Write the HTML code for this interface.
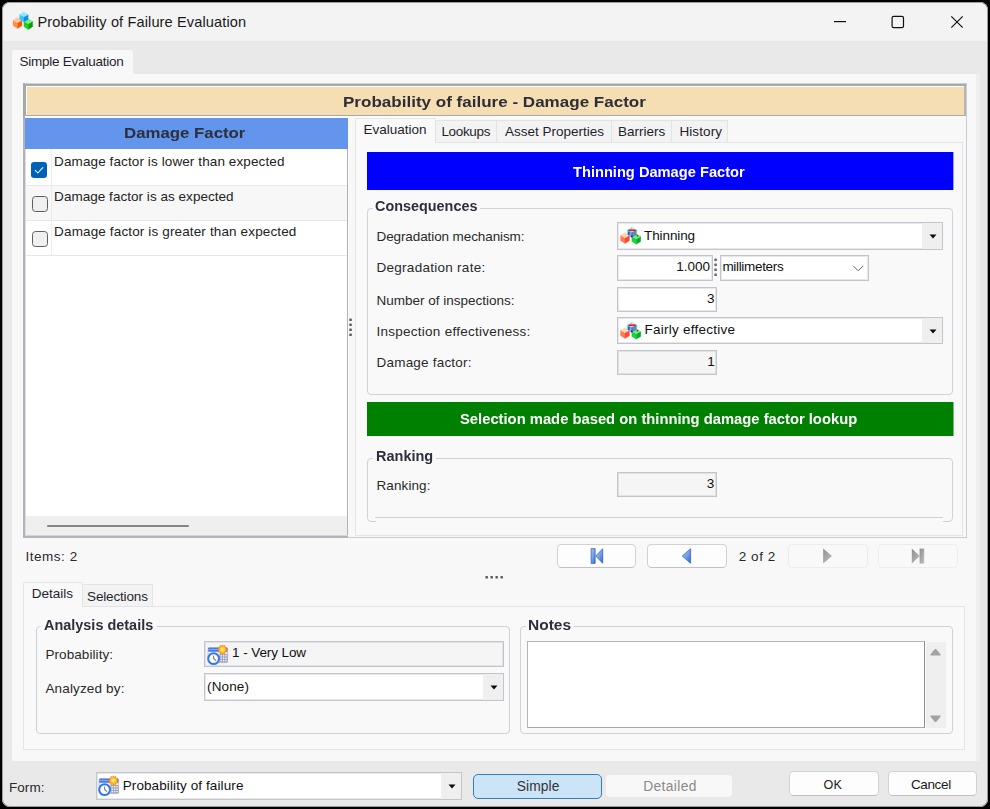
<!DOCTYPE html>
<html lang="en"><head><meta charset="utf-8"><title>Probability of Failure Evaluation</title>
<style>
html,body{margin:0;padding:0;}
body{width:990px;height:809px;background:#000;overflow:hidden;position:relative;font-family:"Liberation Sans", sans-serif;}
#win{position:absolute;left:0;top:0;width:990px;height:809px;}
#win div,#win svg,#win span.t{position:absolute;box-sizing:border-box;}
span.t{white-space:pre;font-family:"Liberation Sans", sans-serif;}
</style></head><body>
<div id="win">
<div style="left:2px;top:2px;width:986px;height:805px;background:#e9e9e9;border-radius:8px;overflow:hidden;box-shadow:inset 0 0 0 1px #9b9b9b;"></div>
<div style="left:3px;top:3px;width:984px;height:38px;background:#f3f3f3;border-radius:7px 7px 0 0;"></div>
<svg style="left:12px;top:11px" width="22.0" height="20.0" viewBox="0 0 22 20"><path d="M1.00 9.20 L5.50 11.80 L5.50 17.60 L1.00 14.80 Z" fill="#ff8f45" stroke="#ff8f45" stroke-width="0.25" stroke-linejoin="round"/><path d="M10.00 9.20 L10.00 14.80 L5.50 17.60 L5.50 11.80 Z" fill="#f4560e" stroke="#f4560e" stroke-width="0.25" stroke-linejoin="round"/><path d="M5.50 6.40 L10.00 9.20 L5.50 11.80 L1.00 9.20 Z" fill="#ffc79a" stroke="#ffc79a" stroke-width="0.25" stroke-linejoin="round"/><path d="M11.90 10.30 L16.30 12.80 L16.30 18.40 L11.90 15.70 Z" fill="#19d419" stroke="#19d419" stroke-width="0.25" stroke-linejoin="round"/><path d="M20.70 10.30 L20.70 15.70 L16.30 18.40 L16.30 12.80 Z" fill="#0a9e0a" stroke="#0a9e0a" stroke-width="0.25" stroke-linejoin="round"/><path d="M16.30 7.60 L20.70 10.30 L16.30 12.80 L11.90 10.30 Z" fill="#7df07d" stroke="#7df07d" stroke-width="0.25" stroke-linejoin="round"/><path d="M7.60 3.50 L11.90 5.80 L11.90 11.00 L7.60 8.50 Z" fill="#33c3ff" stroke="#33c3ff" stroke-width="0.25" stroke-linejoin="round"/><path d="M16.20 3.50 L16.20 8.50 L11.90 11.00 L11.90 5.80 Z" fill="#0f8fea" stroke="#0f8fea" stroke-width="0.25" stroke-linejoin="round"/><path d="M11.90 1.00 L16.20 3.50 L11.90 5.80 L7.60 3.50 Z" fill="#8fe9ff" stroke="#8fe9ff" stroke-width="0.25" stroke-linejoin="round"/></svg>
<span class="t" style="top:12.44px;font-size:14.6px;line-height:20px;color:#1a1a1a;letter-spacing:0.108px;left:37.40px;">Probability of Failure Evaluation</span>
<svg style="left:830px;top:12px" width="140" height="20" viewBox="0 0 140 20" fill="none" stroke="#111" stroke-width="1.2">
<path d="M4 9.6 H16"/>
<rect x="62.1" y="4.3" width="11.4" height="11.4" rx="1.6"/>
<path d="M121.3 4.3 L132.7 15.7 M132.7 4.3 L121.3 15.7"/>
</svg>
<div style="left:12px;top:50px;width:121px;height:26px;background:#f8f8f8;border-radius:2px 2px 0 0;"></div>
<span class="t" style="top:51.92px;font-size:13.5px;line-height:20px;color:#1f1f2e;letter-spacing:-0.229px;left:19.40px;">Simple Evaluation</span>
<div style="left:12px;top:74px;width:964px;height:687px;background:#f8f8f8;"></div>
<div style="left:976px;top:74px;width:4px;height:687px;background:#efefef;"></div>
<div style="left:23px;top:83px;width:944px;height:455px;border:1px solid #c8ccd3;border-top:none;border-left:none;"></div>
<div style="left:23px;top:83px;width:943px;height:1px;background:#cfcfcf;"></div>
<div style="left:23px;top:84px;width:943px;height:2px;background:#a9a9a9;"></div>
<div style="left:23px;top:83px;width:2px;height:35px;background:#a9a9a9;"></div>
<div style="left:25px;top:86px;width:1px;height:30px;background:#a9a9a9;"></div>
<div style="left:964px;top:86px;width:2px;height:30px;background:#b4b4b4;"></div>
<div style="left:26px;top:86px;width:938px;height:29px;background:#fff;"></div>
<div style="left:27px;top:87px;width:937px;height:28px;background:#f5deb3;"></div>
<div style="left:25px;top:115px;width:941px;height:1px;background:#a9a9a9;"></div>
<div style="left:25px;top:116px;width:941px;height:2px;background:#fbfbfb;"></div>
<span class="t" style="top:92.06px;font-size:15.4px;line-height:20px;color:#2e2e36;font-weight:700;left:342.70px;transform:scaleX(1.1068);transform-origin:0 0;">Probability of failure - Damage Factor</span>
<div style="left:25px;top:118px;width:323px;height:419px;background:#fff;"></div>
<div style="left:25px;top:118px;width:323px;height:31px;background:#6495ed;"></div>
<span class="t" style="top:123.06px;font-size:15.4px;line-height:20px;color:#2d2f3c;font-weight:700;left:124.00px;transform:scaleX(1.0917);transform-origin:0 0;">Damage Factor</span>
<div style="left:25px;top:185px;width:323px;height:35px;background:#f7f7f7;"></div>
<div style="left:25px;top:185px;width:322px;height:1px;background:#e7e7e7;"></div>
<div style="left:25px;top:220px;width:322px;height:1px;background:#e7e7e7;"></div>
<div style="left:25px;top:255px;width:322px;height:1px;background:#e7e7e7;"></div>
<div style="left:51px;top:149px;width:1px;height:106px;background:#ececec;"></div>
<div style="left:347px;top:149px;width:1px;height:388px;background:#b0b2bb;"></div>
<svg style="left:30px;top:161px" width="18" height="18" viewBox="0 0 18 18">
<rect x="1" y="1" width="16" height="16" rx="3.2" fill="#005fb8"/>
<path d="M5.2 9.4 L7.8 12 L12.8 6.6" fill="none" stroke="#fff" stroke-width="1.05" stroke-linecap="round" stroke-linejoin="round"/>
</svg>
<div style="left:31.5px;top:196px;width:16.0px;height:16px;background:#f0f0f0;border:1px solid #5f5f5f;border-radius:3.5px;"></div>
<div style="left:31.5px;top:231px;width:16.0px;height:16px;background:#f0f0f0;border:1px solid #5f5f5f;border-radius:3.5px;"></div>
<span class="t" style="top:152.02px;font-size:13.5px;line-height:20px;color:#222;letter-spacing:0.105px;left:54.10px;">Damage factor is lower than expected</span>
<span class="t" style="top:186.82px;font-size:13.5px;line-height:20px;color:#222;letter-spacing:0.034px;left:54.10px;">Damage factor is as expected</span>
<span class="t" style="top:221.92px;font-size:13.5px;line-height:20px;color:#222;letter-spacing:0.139px;left:54.10px;">Damage factor is greater than expected</span>
<div style="left:25px;top:516px;width:322px;height:20px;background:#efefef;"></div>
<div style="left:23px;top:536px;width:325px;height:2px;background:#b2b3ba;"></div>
<div style="left:25px;top:535px;width:323px;height:1px;background:#d3d4d8;"></div>
<div style="left:23px;top:118px;width:2px;height:420px;background:#b2b3ba;"></div>
<div style="left:25px;top:149px;width:1px;height:387px;background:#dcdde0;"></div>
<div style="left:47px;top:525px;width:142px;height:2px;background:#858585;border-radius:1px;"></div>
<div style="left:348px;top:118px;width:618px;height:419px;background:#f8f8f8;"></div>
<div style="left:435px;top:120px;width:62px;height:23px;background:#f3f3f3;border:1px solid #e4e4e4;border-bottom:none;"></div>
<span class="t" style="top:122.42px;font-size:13.5px;line-height:20px;color:#1f1f2e;letter-spacing:-0.341px;left:441.40px;">Lookups</span>
<div style="left:496px;top:120px;width:116px;height:23px;background:#f3f3f3;border:1px solid #e4e4e4;border-bottom:none;"></div>
<span class="t" style="top:122.42px;font-size:13.5px;line-height:20px;color:#1f1f2e;letter-spacing:0.010px;left:504.90px;">Asset Properties</span>
<div style="left:611px;top:120px;width:61px;height:23px;background:#f3f3f3;border:1px solid #e4e4e4;border-bottom:none;"></div>
<span class="t" style="top:122.42px;font-size:13.5px;line-height:20px;color:#1f1f2e;left:618.10px;">Barriers</span>
<div style="left:671px;top:120px;width:57px;height:23px;background:#f3f3f3;border:1px solid #e4e4e4;border-bottom:none;"></div>
<span class="t" style="top:122.42px;font-size:13.5px;line-height:20px;color:#1f1f2e;letter-spacing:0.114px;left:679.40px;">History</span>
<div style="left:355px;top:142px;width:608px;height:394px;background:#f9f9f9;border:1px solid #e4e4e4;"></div>
<div style="left:355px;top:118px;width:81px;height:25px;background:#f9f9f9;border:1px solid #e4e4e4;border-bottom:none;border-radius:2px 2px 0 0;"></div>
<span class="t" style="top:119.82px;font-size:13.5px;line-height:20px;color:#1f1f2e;letter-spacing:-0.005px;left:363.40px;">Evaluation</span>
<div style="left:367px;top:152px;width:586px;height:38px;background:#0000ff;"></div>
<div style="left:953px;top:152px;width:1px;height:38px;background:#9c9cfc;"></div>
<span class="t" style="top:163.24px;font-size:13.75px;line-height:20px;color:#fff;font-weight:700;left:573.10px;transform:scaleX(1.0651);transform-origin:0 0;">Thinning Damage Factor</span>
<div style="left:367px;top:208px;width:586px;height:187px;border:1px solid #cdd3da;border-radius:4px;"></div>
<div style="left:373px;top:205px;width:107px;height:7px;background:#f9f9f9;"></div>
<span class="t" style="top:197.14px;font-size:13.75px;line-height:20px;color:#2d2f3c;font-weight:700;left:375.00px;transform:scaleX(1.0469);transform-origin:0 0;">Consequences</span>
<span class="t" style="top:227.02px;font-size:13.5px;line-height:20px;color:#2a2a2a;letter-spacing:-0.099px;left:376.50px;">Degradation mechanism:</span>
<span class="t" style="top:258.42px;font-size:13.5px;line-height:20px;color:#2a2a2a;letter-spacing:0.273px;left:376.50px;">Degradation rate:</span>
<span class="t" style="top:290.52px;font-size:13.5px;line-height:20px;color:#2a2a2a;left:376.50px;">Number of inspections:</span>
<span class="t" style="top:322.02px;font-size:13.5px;line-height:20px;color:#2a2a2a;letter-spacing:0.259px;left:376.50px;">Inspection effectiveness:</span>
<span class="t" style="top:353.32px;font-size:13.5px;line-height:20px;color:#2a2a2a;letter-spacing:0.208px;left:376.50px;">Damage factor:</span>
<div style="left:617px;top:222px;width:326px;height:28px;background:#fff;border:1px solid #c3c4cc;box-shadow:inset 0 0 0 1px rgba(196,197,206,0.4);"></div>
<div style="left:922px;top:223px;width:20px;height:26px;background:#efefef;"></div>
<svg style="left:928.6px;top:234.2px" width="8" height="5" viewBox="0 0 8 5"><path d="M0.5 0.5 H7.5 L4 4.6 Z" fill="#0a0a0a"/></svg>
<div style="left:617px;top:255px;width:96px;height:26px;background:#fff;border:1px solid #c3c4cc;box-shadow:inset 0 0 0 1px rgba(196,197,206,0.4);"></div>
<div style="left:720px;top:255px;width:149px;height:26px;background:#fff;border:1px solid #c3c4cc;box-shadow:inset 0 0 0 1px rgba(196,197,206,0.4);"></div>
<div style="left:617px;top:287px;width:100px;height:25px;background:#fff;border:1px solid #c3c4cc;box-shadow:inset 0 0 0 1px rgba(196,197,206,0.4);"></div>
<div style="left:617px;top:317px;width:326px;height:27px;background:#fff;border:1px solid #c3c4cc;box-shadow:inset 0 0 0 1px rgba(196,197,206,0.4);"></div>
<div style="left:922px;top:318px;width:20px;height:25px;background:#efefef;"></div>
<svg style="left:928.6px;top:328.7px" width="8" height="5" viewBox="0 0 8 5"><path d="M0.5 0.5 H7.5 L4 4.6 Z" fill="#0a0a0a"/></svg>
<div style="left:617px;top:350px;width:100px;height:25px;background:#f5f5f5;border:1px solid #c3c4cc;box-shadow:inset 0 0 0 1px rgba(196,197,206,0.4);"></div>
<span class="t" style="top:225.62px;font-size:13.5px;line-height:20px;color:#111;letter-spacing:-0.114px;left:644.10px;">Thinning</span>
<span class="t" style="top:320.12px;font-size:13.5px;line-height:20px;color:#111;letter-spacing:0.261px;left:644.40px;">Fairly effective</span>
<span class="t" style="top:257.02px;font-size:13.5px;line-height:20px;color:#111;right:279.90px;">1.000</span>
<span class="t" style="top:289.02px;font-size:13.5px;line-height:20px;color:#111;right:275.60px;">3</span>
<span class="t" style="top:352.12px;font-size:13.5px;line-height:20px;color:#111;right:275.30px;">1</span>
<span class="t" style="top:257.32px;font-size:13.5px;line-height:20px;color:#111;letter-spacing:-0.322px;left:722.40px;">millimeters</span>
<svg style="left:852px;top:264px" width="12" height="8" viewBox="0 0 12 8"><path d="M1.2 1.8 L6.2 6.8 L11.2 1.8" fill="none" stroke="#666" stroke-width="1"/></svg>
<svg style="left:712px;top:255px" width="8" height="24" viewBox="0 0 8 24"><rect x="2.35" y="3.45" width="2.5" height="2.5" rx="0.5" fill="#666"/><rect x="2.35" y="8.45" width="2.5" height="2.5" rx="0.5" fill="#666"/><rect x="2.35" y="13.45" width="2.5" height="2.5" rx="0.5" fill="#666"/><rect x="2.35" y="18.45" width="2.5" height="2.5" rx="0.5" fill="#666"/></svg>
<div style="left:367px;top:402px;width:586px;height:34px;background:#008000;"></div>
<div style="left:953px;top:402px;width:1px;height:34px;background:#7cbc7c;"></div>
<span class="t" style="top:410.44px;font-size:13.75px;line-height:20px;color:#fff;font-weight:700;left:460.00px;transform:scaleX(1.0741);transform-origin:0 0;">Selection made based on thinning damage factor lookup</span>
<div style="left:367px;top:458px;width:586px;height:64px;border:1px solid #cdd3da;border-radius:4px;"></div>
<div style="left:376px;top:519px;width:567px;height:5px;background:#f9f9f9;"></div>
<div style="left:375px;top:517px;width:568px;height:1px;background:#cdd3da;"></div>
<div style="left:373px;top:455px;width:63px;height:7px;background:#f9f9f9;"></div>
<span class="t" style="top:447.34px;font-size:13.75px;line-height:20px;color:#2d2f3c;font-weight:700;left:375.80px;transform:scaleX(1.0544);transform-origin:0 0;">Ranking</span>
<span class="t" style="top:475.72px;font-size:13.5px;line-height:20px;color:#2a2a2a;letter-spacing:0.100px;left:376.50px;">Ranking:</span>
<div style="left:617px;top:472px;width:100px;height:25px;background:#f5f5f5;border:1px solid #c3c4cc;box-shadow:inset 0 0 0 1px rgba(196,197,206,0.4);"></div>
<span class="t" style="top:474.32px;font-size:13.5px;line-height:20px;color:#111;right:275.70px;">3</span>
<span class="t" style="top:546.82px;font-size:13.5px;line-height:20px;color:#2a2a2a;letter-spacing:0.541px;left:25.40px;">Items: 2</span>
<div style="left:557px;top:544px;width:79px;height:24px;background:#fdfdfd;border:1px solid #d2d2d2;border-bottom-color:#c2c2c2;border-radius:4.5px;"></div>
<div style="left:647px;top:544px;width:80px;height:24px;background:#fdfdfd;border:1px solid #d2d2d2;border-bottom-color:#c2c2c2;border-radius:4.5px;"></div>
<div style="left:788px;top:544px;width:80px;height:24px;background:#f9f9f9;border:1px solid #ececec;border-radius:4.5px;"></div>
<div style="left:878px;top:544px;width:80px;height:24px;background:#f9f9f9;border:1px solid #ececec;border-radius:4.5px;"></div>
<svg style="left:588px;top:547px" width="18" height="18" viewBox="0 0 18 18">
<defs><linearGradient id="nb" x1="0" y1="0" x2="1" y2="1"><stop offset="0" stop-color="#a6c8f4"/><stop offset="0.55" stop-color="#6f9fe6"/><stop offset="1" stop-color="#2f62c8"/></linearGradient>
<linearGradient id="ng" x1="0" y1="0" x2="1" y2="1"><stop offset="0" stop-color="#8e8e8e"/><stop offset="1" stop-color="#c2c2c2"/></linearGradient></defs>
<rect x="3.1" y="1.7" width="4" height="14.6" fill="url(#nb)" stroke="#2a58c2" stroke-width="0.7"/>
<path d="M14.7 1.7 L14.7 16.3 L7.7 9 Z" fill="url(#nb)" stroke="#2a58c2" stroke-width="0.7" stroke-linejoin="round"/></svg>
<svg style="left:679px;top:547px" width="18" height="18" viewBox="0 0 18 18">
<path d="M11.6 1.7 L11.6 16.3 L3.2 9 Z" fill="url(#nb)" stroke="#2a58c2" stroke-width="0.7" stroke-linejoin="round"/></svg>
<svg style="left:820px;top:547px" width="18" height="18" viewBox="0 0 18 18">
<path d="M3.2 1.6 L3.2 16.6 L12 9.1 Z" fill="url(#ng)"/></svg>
<svg style="left:909px;top:547px" width="18" height="18" viewBox="0 0 18 18">
<path d="M2.8 1.6 L2.8 16.6 L10.8 9.1 Z" fill="url(#ng)"/><rect x="10.6" y="1.6" width="4.6" height="15" fill="url(#ng)"/></svg>
<span class="t" style="top:547.22px;font-size:13.5px;line-height:20px;color:#2a2a2a;letter-spacing:0.524px;left:738.80px;">2 of 2</span>
<svg style="left:483px;top:573px" width="24" height="8" viewBox="0 0 24 8"><rect x="2.45" y="3.0" width="2.5" height="2.5" rx="0.5" fill="#5c5c5c"/><rect x="7.45" y="3.0" width="2.5" height="2.5" rx="0.5" fill="#5c5c5c"/><rect x="12.45" y="3.0" width="2.5" height="2.5" rx="0.5" fill="#5c5c5c"/><rect x="17.45" y="3.0" width="2.5" height="2.5" rx="0.5" fill="#5c5c5c"/></svg>
<div style="left:82px;top:584px;width:71px;height:23px;background:#f3f3f3;border:1px solid #e4e4e4;border-bottom:none;"></div>
<span class="t" style="top:586.52px;font-size:13.5px;line-height:20px;color:#1f1f2e;letter-spacing:-0.166px;left:87.10px;">Selections</span>
<div style="left:23px;top:606px;width:942px;height:144px;background:#f9f9f9;border:1px solid #e4e4e4;"></div>
<div style="left:23px;top:581.5px;width:60px;height:25.5px;background:#f9f9f9;border:1px solid #e4e4e4;border-bottom:none;border-radius:2px 2px 0 0;"></div>
<span class="t" style="top:584.02px;font-size:13.5px;line-height:20px;color:#1f1f2e;letter-spacing:0.022px;left:31.70px;">Details</span>
<div style="left:36px;top:626px;width:474px;height:108px;border:1px solid #cdd3da;border-radius:4px;"></div>
<div style="left:41px;top:623px;width:116px;height:7px;background:#f9f9f9;"></div>
<span class="t" style="top:616.34px;font-size:13.75px;line-height:20px;color:#2d2f3c;font-weight:700;left:44.00px;transform:scaleX(1.0506);transform-origin:0 0;">Analysis details</span>
<span class="t" style="top:644.52px;font-size:13.5px;line-height:20px;color:#2a2a2a;letter-spacing:0.082px;left:45.40px;">Probability:</span>
<span class="t" style="top:679.32px;font-size:13.5px;line-height:20px;color:#2a2a2a;letter-spacing:0.155px;left:45.40px;">Analyzed by:</span>
<div style="left:204px;top:641px;width:300px;height:26px;background:#f5f5f5;border:1px solid #c3c4cc;box-shadow:inset 0 0 0 1px rgba(196,197,206,0.4);"></div>
<div style="left:204px;top:673px;width:300px;height:28px;background:#fff;border:1px solid #c3c4cc;box-shadow:inset 0 0 0 1px rgba(196,197,206,0.4);"></div>
<div style="left:483px;top:674px;width:20px;height:26px;background:#efefef;"></div>
<svg style="left:489.6px;top:685.2px" width="8" height="5" viewBox="0 0 8 5"><path d="M0.5 0.5 H7.5 L4 4.6 Z" fill="#0a0a0a"/></svg>
<span class="t" style="top:643.22px;font-size:13.5px;line-height:20px;color:#111;letter-spacing:-0.095px;left:232.10px;">1 - Very Low</span>
<span class="t" style="top:676.52px;font-size:13.5px;line-height:20px;color:#111;letter-spacing:0.147px;left:207.00px;">(None)</span>
<div style="left:520px;top:626px;width:433px;height:108px;border:1px solid #cdd3da;border-radius:4px;"></div>
<div style="left:526px;top:623px;width:48px;height:7px;background:#f9f9f9;"></div>
<span class="t" style="top:616.34px;font-size:13.75px;line-height:20px;color:#2d2f3c;font-weight:700;left:528.20px;transform:scaleX(1.1256);transform-origin:0 0;">Notes</span>
<div style="left:527px;top:641px;width:398px;height:87px;background:#fff;border:1px solid #b4b5bc;border-right-color:#8f8f8f;border-bottom-color:#a8a8a8;"></div>
<div style="left:926px;top:642px;width:20px;height:86px;background:#efefef;"></div>
<svg style="left:929.3px;top:648px" width="13" height="9" viewBox="0 0 13 9"><path d="M6.5 1.2 Q7 0.8 7.6 1.6 L11.6 6.4 Q12 7.4 11 7.4 L2 7.4 Q1 7.4 1.4 6.4 L5.4 1.6 Q6 0.8 6.5 1.2Z" fill="#a2a2a2"/></svg>
<svg style="left:929.3px;top:714px" width="13" height="9" viewBox="0 0 13 9"><path d="M6.5 7.8 Q7 8.2 7.6 7.4 L11.6 2.6 Q12 1.6 11 1.6 L2 1.6 Q1 1.6 1.4 2.6 L5.4 7.4 Q6 8.2 6.5 7.8Z" fill="#a2a2a2"/></svg>
<span class="t" style="top:778.42px;font-size:13.5px;line-height:20px;color:#2a2a2a;letter-spacing:0.012px;left:9.10px;">Form:</span>
<div style="left:96px;top:772px;width:366px;height:28px;background:#fff;border:1px solid #c3c4cc;box-shadow:inset 0 0 0 1px rgba(196,197,206,0.4);"></div>
<div style="left:441px;top:773px;width:20px;height:26px;background:#efefef;"></div>
<svg style="left:447.6px;top:784.2px" width="8" height="5" viewBox="0 0 8 5"><path d="M0.5 0.5 H7.5 L4 4.6 Z" fill="#0a0a0a"/></svg>
<span class="t" style="top:775.62px;font-size:13.5px;line-height:20px;color:#111;letter-spacing:0.102px;left:122.70px;">Probability of failure</span>
<div style="left:472.5px;top:773.5px;width:129.5px;height:25.0px;background:#cce4f7;border:1.5px solid #2f7fc4;border-radius:5px;"></div>
<span class="t" style="top:777.02px;font-size:13.8px;line-height:20px;color:#333;letter-spacing:0.083px;left:516.80px;">Simple</span>
<div style="left:606px;top:775px;width:125.5px;height:22px;background:#f8f8f8;border-radius:4px;"></div>
<span class="t" style="top:777.02px;font-size:13.8px;line-height:20px;color:#8a8a8a;letter-spacing:0.382px;left:643.20px;">Detailed</span>
<div style="left:789px;top:770.5px;width:89.5px;height:25.0px;background:#fdfdfd;border:1px solid #d2d2d2;border-bottom-color:#c0c0c0;border-radius:4.5px;"></div>
<span class="t" style="top:774.83px;font-size:12.6px;line-height:20px;color:#1a1a1a;letter-spacing:0.397px;left:823.40px;">OK</span>
<div style="left:887.5px;top:770.5px;width:89.5px;height:25.0px;background:#fdfdfd;border:1px solid #d2d2d2;border-bottom-color:#c0c0c0;border-radius:4.5px;"></div>
<span class="t" style="top:774.52px;font-size:13.5px;line-height:20px;color:#1a1a1a;letter-spacing:-0.346px;left:910.90px;">Cancel</span>
<svg style="left:620px;top:227px;filter:blur(0.3px)" width="22" height="18" viewBox="0 0 22 18"><path d="M0.50 8.30 L5.00 10.80 L5.00 16.40 L0.50 13.70 Z" fill="#ff7a55" stroke="#ff7a55" stroke-width="0.25" stroke-linejoin="round"/><path d="M9.50 8.30 L9.50 13.70 L5.00 16.40 L5.00 10.80 Z" fill="#ff4a2e" stroke="#ff4a2e" stroke-width="0.25" stroke-linejoin="round"/><path d="M5.00 5.60 L9.50 8.30 L5.00 10.80 L0.50 8.30 Z" fill="#ffd6b4" stroke="#ffd6b4" stroke-width="0.25" stroke-linejoin="round"/><path d="M11.80 9.40 L16.30 11.80 L16.30 17.20 L11.80 14.60 Z" fill="#16d63c" stroke="#16d63c" stroke-width="0.25" stroke-linejoin="round"/><path d="M20.80 9.40 L20.80 14.60 L16.30 17.20 L16.30 11.80 Z" fill="#08aa2a" stroke="#08aa2a" stroke-width="0.25" stroke-linejoin="round"/><path d="M16.30 6.80 L20.80 9.40 L16.30 11.80 L11.80 9.40 Z" fill="#5cf57a" stroke="#5cf57a" stroke-width="0.25" stroke-linejoin="round"/><path d="M7.40 2.70 L12.00 5.00 L12.00 10.20 L7.40 7.70 Z" fill="#3fd0f4" stroke="#3fd0f4" stroke-width="0.25" stroke-linejoin="round"/><path d="M16.60 2.70 L16.60 7.70 L12.00 10.20 L12.00 5.00 Z" fill="#2a9ef0" stroke="#2a9ef0" stroke-width="0.25" stroke-linejoin="round"/><path d="M12.00 0.20 L16.60 2.70 L12.00 5.00 L7.40 2.70 Z" fill="#b8e6f8" stroke="#b8e6f8" stroke-width="0.25" stroke-linejoin="round"/><path d="M8.4 2.4 H15.8 V4.1 H8.4 Z" fill="#dd1414" opacity="0.92"/><path d="M10 1.2 L11.4 0.6 L11.8 1.8 Z" fill="#7fbf4f"/><path d="M8.2 4.6 L9.6 5 L9.4 8.6 L8.2 7.8 Z" fill="#5a22c8"/><path d="M11.4 5.4 L12.6 5.4 L12.6 9.8 L11.4 9.8 Z" fill="#e23a2a"/><path d="M13.6 5.2 L14.8 4.9 L15.6 7.6 L14.6 8.2 Z" fill="#e05a48"/><circle cx="11.6" cy="9.4" r="1" fill="#5014d0"/><circle cx="17.6" cy="8.6" r="0.9" fill="#d81818"/></svg>
<svg style="left:620px;top:322px;filter:blur(0.3px)" width="22" height="18" viewBox="0 0 22 18"><path d="M0.50 8.30 L5.00 10.80 L5.00 16.40 L0.50 13.70 Z" fill="#ff7a55" stroke="#ff7a55" stroke-width="0.25" stroke-linejoin="round"/><path d="M9.50 8.30 L9.50 13.70 L5.00 16.40 L5.00 10.80 Z" fill="#ff4a2e" stroke="#ff4a2e" stroke-width="0.25" stroke-linejoin="round"/><path d="M5.00 5.60 L9.50 8.30 L5.00 10.80 L0.50 8.30 Z" fill="#ffd6b4" stroke="#ffd6b4" stroke-width="0.25" stroke-linejoin="round"/><path d="M11.80 9.40 L16.30 11.80 L16.30 17.20 L11.80 14.60 Z" fill="#16d63c" stroke="#16d63c" stroke-width="0.25" stroke-linejoin="round"/><path d="M20.80 9.40 L20.80 14.60 L16.30 17.20 L16.30 11.80 Z" fill="#08aa2a" stroke="#08aa2a" stroke-width="0.25" stroke-linejoin="round"/><path d="M16.30 6.80 L20.80 9.40 L16.30 11.80 L11.80 9.40 Z" fill="#5cf57a" stroke="#5cf57a" stroke-width="0.25" stroke-linejoin="round"/><path d="M7.40 2.70 L12.00 5.00 L12.00 10.20 L7.40 7.70 Z" fill="#3fd0f4" stroke="#3fd0f4" stroke-width="0.25" stroke-linejoin="round"/><path d="M16.60 2.70 L16.60 7.70 L12.00 10.20 L12.00 5.00 Z" fill="#2a9ef0" stroke="#2a9ef0" stroke-width="0.25" stroke-linejoin="round"/><path d="M12.00 0.20 L16.60 2.70 L12.00 5.00 L7.40 2.70 Z" fill="#b8e6f8" stroke="#b8e6f8" stroke-width="0.25" stroke-linejoin="round"/><path d="M8.4 2.4 H15.8 V4.1 H8.4 Z" fill="#dd1414" opacity="0.92"/><path d="M10 1.2 L11.4 0.6 L11.8 1.8 Z" fill="#7fbf4f"/><path d="M8.2 4.6 L9.6 5 L9.4 8.6 L8.2 7.8 Z" fill="#5a22c8"/><path d="M11.4 5.4 L12.6 5.4 L12.6 9.8 L11.4 9.8 Z" fill="#e23a2a"/><path d="M13.6 5.2 L14.8 4.9 L15.6 7.6 L14.6 8.2 Z" fill="#e05a48"/><circle cx="11.6" cy="9.4" r="1" fill="#5014d0"/><circle cx="17.6" cy="8.6" r="0.9" fill="#d81818"/></svg>
<svg style="left:207.4px;top:643.8px" width="22" height="22" viewBox="0 0 22 22">
<defs><radialGradient id="sun" cx="0.5" cy="0.5" r="0.5"><stop offset="0" stop-color="#fff9b0"/><stop offset="0.35" stop-color="#ffd83a"/><stop offset="0.8" stop-color="#ff8a14"/><stop offset="1" stop-color="#ff7a10"/></radialGradient></defs>
<rect x="1" y="4" width="19.6" height="14.6" rx="1.4" fill="#eef2fb" stroke="#9aa8c8" stroke-width="0.6"/>
<rect x="1" y="3.6" width="19.6" height="4.2" rx="1.2" fill="#4a7be6"/>
<rect x="1" y="5" width="19.6" height="0.8" fill="#8fb0f5"/>
<path d="M12.6 10.6 H20 M12.6 13 H20 M12.6 15.4 H20 M12.6 17.8 H20 M13 10.2 V18.2 M15.4 10.2 V18.2 M17.8 10.2 V18.2 M20.2 10.2 V18.2" stroke="#8f96ae" stroke-width="0.8" fill="none"/>
<circle cx="6.6" cy="14.6" r="5.4" fill="#fff" stroke="#3478f0" stroke-width="2"/>
<path d="M6.4 11.6 L6.8 14.8 L9 16.6" stroke="#707a90" stroke-width="1.1" fill="none"/>
<path d="M15.4 0.4 l1 1.4 l1.6 -0.7 l0.2 1.7 l1.7 0.2 l-0.7 1.6 l1.4 1 l-1.4 1 l0.7 1.6 l-1.7 0.2 l-0.2 1.7 l-1.6 -0.7 l-1 1.4 l-1 -1.4 l-1.6 0.7 l-0.2 -1.7 l-1.7 -0.2 l0.7 -1.6 l-1.4 -1 l1.4 -1 l-0.7 -1.6 l1.7 -0.2 l0.2 -1.7 l1.6 0.7 Z" fill="url(#sun)"/>
</svg>
<svg style="left:98.4px;top:775px" width="22" height="22" viewBox="0 0 22 22">
<defs><radialGradient id="sun" cx="0.5" cy="0.5" r="0.5"><stop offset="0" stop-color="#fff9b0"/><stop offset="0.35" stop-color="#ffd83a"/><stop offset="0.8" stop-color="#ff8a14"/><stop offset="1" stop-color="#ff7a10"/></radialGradient></defs>
<rect x="1" y="4" width="19.6" height="14.6" rx="1.4" fill="#eef2fb" stroke="#9aa8c8" stroke-width="0.6"/>
<rect x="1" y="3.6" width="19.6" height="4.2" rx="1.2" fill="#4a7be6"/>
<rect x="1" y="5" width="19.6" height="0.8" fill="#8fb0f5"/>
<path d="M12.6 10.6 H20 M12.6 13 H20 M12.6 15.4 H20 M12.6 17.8 H20 M13 10.2 V18.2 M15.4 10.2 V18.2 M17.8 10.2 V18.2 M20.2 10.2 V18.2" stroke="#8f96ae" stroke-width="0.8" fill="none"/>
<circle cx="6.6" cy="14.6" r="5.4" fill="#fff" stroke="#3478f0" stroke-width="2"/>
<path d="M6.4 11.6 L6.8 14.8 L9 16.6" stroke="#707a90" stroke-width="1.1" fill="none"/>
<path d="M15.4 0.4 l1 1.4 l1.6 -0.7 l0.2 1.7 l1.7 0.2 l-0.7 1.6 l1.4 1 l-1.4 1 l0.7 1.6 l-1.7 0.2 l-0.2 1.7 l-1.6 -0.7 l-1 1.4 l-1 -1.4 l-1.6 0.7 l-0.2 -1.7 l-1.7 -0.2 l0.7 -1.6 l-1.4 -1 l1.4 -1 l-0.7 -1.6 l1.7 -0.2 l0.2 -1.7 l1.6 0.7 Z" fill="url(#sun)"/>
</svg>
<svg style="left:347px;top:315px" width="8" height="24" viewBox="0 0 8 24"><rect x="2.3" y="3.4" width="2.5" height="2.5" rx="0.5" fill="#5c5c5c"/><rect x="2.3" y="8.4" width="2.5" height="2.5" rx="0.5" fill="#5c5c5c"/><rect x="2.3" y="13.4" width="2.5" height="2.5" rx="0.5" fill="#5c5c5c"/><rect x="2.3" y="18.4" width="2.5" height="2.5" rx="0.5" fill="#5c5c5c"/></svg>
</div>
</body></html>
